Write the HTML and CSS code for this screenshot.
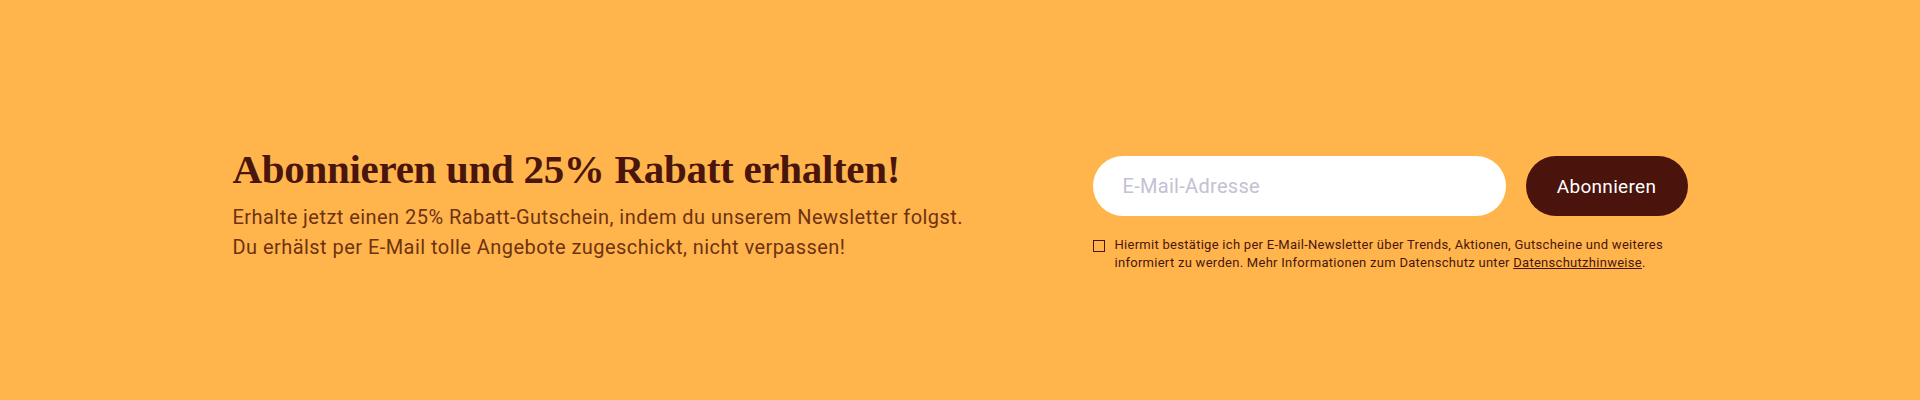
FILE: index.html
```html
<!DOCTYPE html>
<html lang="de">
<head>
<meta charset="utf-8">
<title>Newsletter</title>
<link rel="stylesheet" href="styles.css">
</head>
<body>
<section class="newsletter">
  <div class="inner">
    <div class="intro">
      <h2 class="title">Abonnieren und 25% Rabatt erhalten!</h2>
      <p class="lead">Erhalte jetzt einen 25% Rabatt-Gutschein, indem du unserem Newsletter folgst.<br>Du erhälst per E-Mail tolle Angebote zugeschickt, nicht verpassen!</p>
    </div>
    <form class="signup">
      <div class="row">
        <input class="email" type="email" placeholder="E-Mail-Adresse">
        <button class="btn" type="button">Abonnieren</button>
      </div>
      <label class="consent">
        <span class="box"></span>
        <span class="consent-text">Hiermit bestätige ich per E-Mail-Newsletter über Trends, Aktionen, Gutscheine und weiteres informiert zu werden. Mehr Informationen zum Datenschutz unter <a href="#">Datenschutzhinweise</a>.</span>
      </label>
    </form>
  </div>
</section>
</body>
</html>
```
FILE: styles.css
```css
* { box-sizing: border-box; }
html, body { margin: 0; padding: 0; }
body { background: #ffb54c; font-family: Roboto, "Liberation Sans", sans-serif; }
.newsletter { height: 400px; background: #ffb54c; }
.inner {
  width: 1455px;
  margin: 0 auto;
  padding-top: 145px;
  display: flex;
  justify-content: space-between;
  align-items: flex-start;
}
.title {
  margin: 0;
  font-family: "Liberation Serif", serif;
  font-weight: 700;
  font-size: 41px;
  line-height: 48px;
  color: #4a150c;
  letter-spacing: -0.3px;
}
.lead {
  margin: 9px 0 0;
  font-size: 20px;
  line-height: 30px;
  letter-spacing: 0.45px;
  color: #6e3212;
}
.signup { width: 595px; margin-top: 11px; }
.row { display: flex; gap: 20px; }
.email {
  flex: 1;
  height: 60px;
  border: 0;
  border-radius: 30px;
  background: #fff;
  padding: 0 30px;
  font-family: inherit;
  font-size: 20px;
  letter-spacing: 0.3px;
  color: #4a150c;
  outline: none;
}
.email::placeholder { color: #c4c1d2; }
.btn {
  width: 162px;
  height: 60px;
  border: 0;
  border-radius: 30px;
  background: #4a130c;
  color: #fff;
  font-family: inherit;
  font-size: 19px;
  letter-spacing: 0.3px;
}
.consent {
  display: flex;
  gap: 10px;
  margin-top: 20px;
  font-size: 13px;
  line-height: 18px;
  letter-spacing: 0.28px;
  color: #4a150c;
}
.box {
  flex: none;
  width: 12px;
  height: 12px;
  border: 1.5px solid #4a150c;
  margin-top: 4px;
}
.consent-text { width: 573px; }
.consent-text a { color: #4a150c; text-decoration: underline; }
```
